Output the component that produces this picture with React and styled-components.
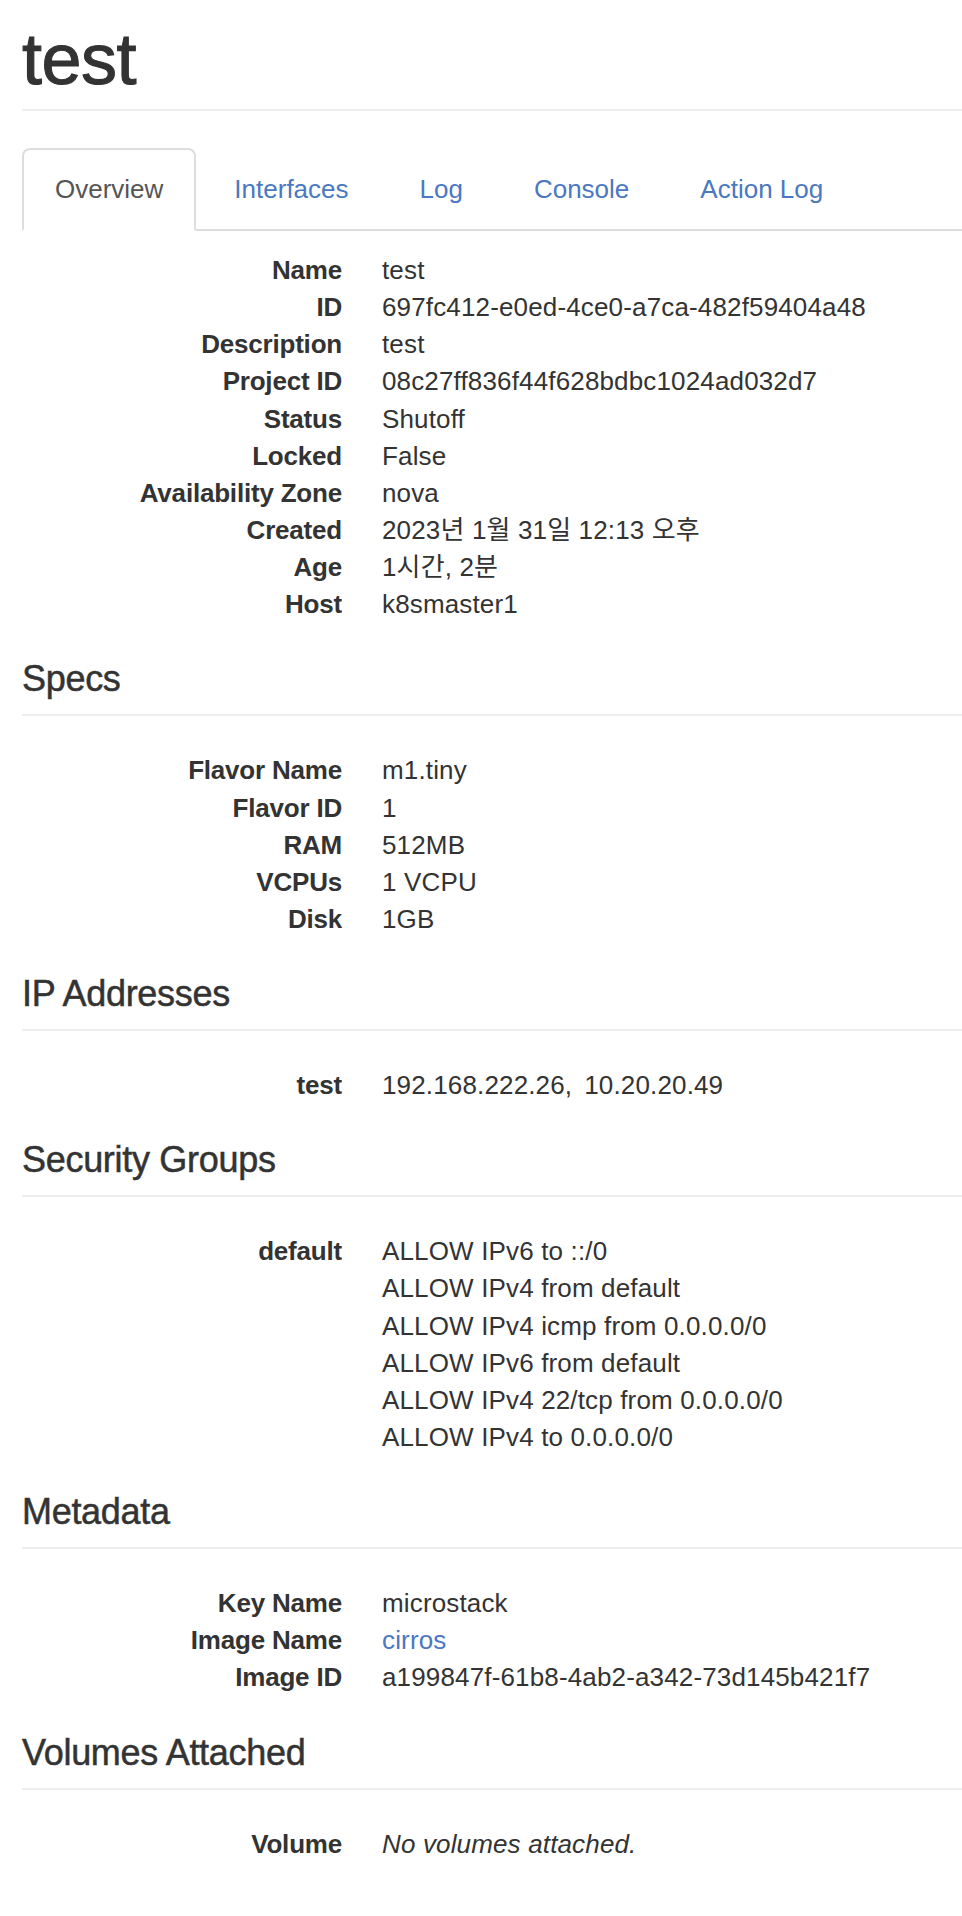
import React from "react";
import styled, { createGlobalStyle } from "styled-components";

const GlobalStyle = createGlobalStyle`
  html, body {
    margin: 0;
    padding: 0;
    background: #fff;
  }
  body {
    font-family: "Liberation Sans", Helvetica, Arial, "Noto Sans CJK KR", sans-serif;
    font-size: 26px;
    line-height: 1.428571;
    color: #333;
  }
`;

const Page = styled.div`
  padding: 0 0 40px 22px;
`;

const Title = styled.h1`
  margin: 0;
  padding: 19px 0 10px;
  font-size: 72px;
  font-weight: 500;
  line-height: 80px;
  letter-spacing: -0.5px;
  color: #333;
  -webkit-text-stroke: 1.1px #333;
  border-bottom: 2px solid #eee;
`;

const NavTabs = styled.ul`
  list-style: none;
  margin: 37px 0 0;
  padding: 0;
  display: flex;
  border-bottom: 2px solid #ddd;
`;

const TabItem = styled.li`
  margin: 0 5px -2px 0;
`;

const TabLink = styled.a`
  display: block;
  padding: 21px 31px;
  line-height: 37px;
  border: 2px solid transparent;
  border-radius: 8px 8px 0 0;
  text-decoration: none;
  color: ${(p) => (p.$active ? "#555" : "#4a78c2")};
  background: ${(p) => (p.$active ? "#fff" : "transparent")};
  border-color: ${(p) => (p.$active ? "#ddd #ddd transparent" : "transparent")};
  cursor: ${(p) => (p.$active ? "default" : "pointer")};
`;

const DetailList = styled.dl`
  display: grid;
  grid-template-columns: 320px 1fr;
  column-gap: 40px;
  margin: ${(p) => p.$top}px 0 0;
`;

const Term = styled.dt`
  grid-column: 1;
  font-weight: 700;
  text-align: right;
  white-space: nowrap;
  letter-spacing: -0.2px;
  overflow: hidden;
`;

const Desc = styled.dd`
  grid-column: 2;
  margin: 0;
  letter-spacing: 0.15px;
  font-style: ${(p) => (p.$italic ? "italic" : "normal")};
`;

const ValueLink = styled.a`
  color: #4a78c2;
  text-decoration: none;
`;

const RuleList = styled.ul`
  list-style: none;
  margin: 0;
  padding: 0;
`;

const AddressSep = styled.span`
  display: inline-block;
  width: 12px;
`;

const SectionTitle = styled.h4`
  margin: 36px 0 15px;
  font-size: 36px;
  font-weight: 500;
  line-height: 40px;
  letter-spacing: -0.3px;
  color: #333;
  -webkit-text-stroke: 0.5px #333;
`;

const HeaderRule = styled.hr`
  margin: 0;
  border: 0;
  border-top: 2px solid #eee;
`;

const tabs = ["Overview", "Interfaces", "Log", "Console", "Action Log"];

const overview = [
  ["Name", "test"],
  ["ID", "697fc412-e0ed-4ce0-a7ca-482f59404a48"],
  ["Description", "test"],
  ["Project ID", "08c27ff836f44f628bdbc1024ad032d7"],
  ["Status", "Shutoff"],
  ["Locked", "False"],
  ["Availability Zone", "nova"],
  ["Created", "2023년 1월 31일 12:13 오후"],
  ["Age", "1시간, 2분"],
  ["Host", "k8smaster1"],
];

const sections = [
  {
    title: "Specs",
    rows: [
      ["Flavor Name", "m1.tiny"],
      ["Flavor ID", "1"],
      ["RAM", "512MB"],
      ["VCPUs", "1 VCPU"],
      ["Disk", "1GB"],
    ],
  },
  {
    title: "IP Addresses",
    rows: [["test", { addresses: ["192.168.222.26", "10.20.20.49"] }]],
  },
  {
    title: "Security Groups",
    rows: [
      [
        "default",
        [
          "ALLOW IPv6 to ::/0",
          "ALLOW IPv4 from default",
          "ALLOW IPv4 icmp from 0.0.0.0/0",
          "ALLOW IPv6 from default",
          "ALLOW IPv4 22/tcp from 0.0.0.0/0",
          "ALLOW IPv4 to 0.0.0.0/0",
        ],
      ],
    ],
  },
  {
    title: "Metadata",
    rows: [
      ["Key Name", "microstack"],
      ["Image Name", { link: "cirros" }],
      ["Image ID", "a199847f-61b8-4ab2-a342-73d145b421f7"],
    ],
  },
  {
    title: "Volumes Attached",
    rows: [["Volume", { italic: "No volumes attached." }]],
  },
];

function Value({ value }) {
  if (Array.isArray(value)) {
    return (
      <Desc>
        <RuleList>
          {value.map((v) => (
            <li key={v}>{v}</li>
          ))}
        </RuleList>
      </Desc>
    );
  }
  if (value && typeof value === "object" && value.addresses) {
    return (
      <Desc>
        {value.addresses.map((a, i) => (
          <React.Fragment key={a}>
            {i > 0 && (
              <>
                ,<AddressSep />
              </>
            )}
            <span>{a}</span>
          </React.Fragment>
        ))}
      </Desc>
    );
  }
  if (value && typeof value === "object" && value.link) {
    return (
      <Desc>
        <ValueLink href="#">{value.link}</ValueLink>
      </Desc>
    );
  }
  if (value && typeof value === "object" && value.italic) {
    return <Desc $italic>{value.italic}</Desc>;
  }
  return <Desc>{value}</Desc>;
}

function Rows({ rows, top }) {
  return (
    <DetailList $top={top}>
      {rows.map(([k, v]) => (
        <React.Fragment key={k}>
          <Term>{k}</Term>
          <Value value={v} />
        </React.Fragment>
      ))}
    </DetailList>
  );
}

export default function App() {
  return (
    <>
      <GlobalStyle />
      <Page>
        <Title>test</Title>
        <NavTabs>
          {tabs.map((t, i) => (
            <TabItem key={t}>
              <TabLink $active={i === 0} href="#">
                {t}
              </TabLink>
            </TabItem>
          ))}
        </NavTabs>
        <Rows rows={overview} top={21} />
        {sections.map((s) => (
          <section key={s.title}>
            <SectionTitle>{s.title}</SectionTitle>
            <HeaderRule />
            <Rows rows={s.rows} top={36} />
          </section>
        ))}
      </Page>
    </>
  );
}
